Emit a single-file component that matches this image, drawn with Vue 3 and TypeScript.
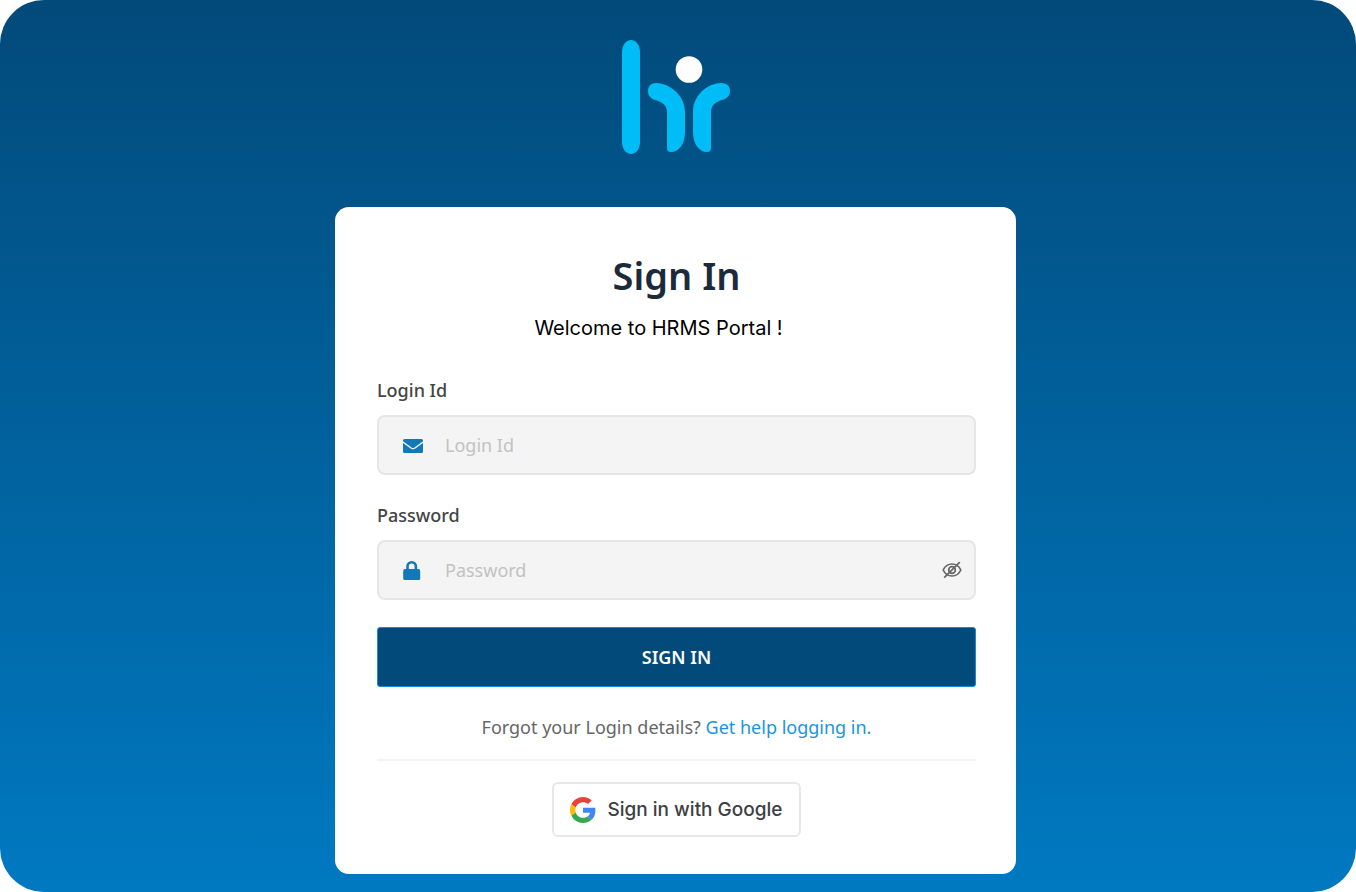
<script setup lang="ts">
import { ref } from 'vue'

const loginId = ref('')
const password = ref('')
const visible = ref(false)
</script>

<template>
  <main class="page">
    <svg class="logo" viewBox="0 0 108 114" role="img" aria-label="hr">
      <g fill="#00bdf7">
        <path d="M0 12C0 5 4 0 9 0s9 5 9 12v90c0 7-4 12-9 12s-9-5-9-12z" />
        <path d="M34 43C46 43 63 54 63 72V92C63 104 57 112 49 112Q45 112 45 108V72C45 66 41 62 33 60C29 59 26 55 26 51.500C26 46 29 43 34 43Z" />
        <path d="M99 43C87 43 71 54 71 72V92C71 104 77 112 85 112Q89 112 89 108V72C89 66 93 62 100 60C105 59 108 55 108 51.500C108 46 105 43 99 43Z" />
      </g>
      <circle cx="67" cy="29.500" r="13.300" fill="#fff" />
    </svg>

    <section class="card">
      <h1>Sign In</h1>
      <p class="welcome">Welcome to HRMS Portal !</p>

      <form @submit.prevent>
        <label for="login-id">Login Id</label>
        <div class="field">
          <svg class="icon" viewBox="0 0 20 20" fill="#1279b8" aria-hidden="true">
            <path d="M1.500 4h17Q20 4 20 5.500v.8l-8.500 6.100q-1.500 1.100-3 0L0 6.300v-.8Q0 4 1.500 4z" />
            <path d="M0 8.100l7.700 5.500q2.300 1.600 4.600 0L20 8.100v8.400q0 1.500-1.500 1.500h-17Q0 18 0 16.500z" />
          </svg>
          <input id="login-id" v-model="loginId" type="text" placeholder="Login Id" />
        </div>

        <label for="password">Password</label>
        <div class="field">
          <svg class="icon" viewBox="0 0 20 20" fill="#1279b8" aria-hidden="true">
            <path fill-rule="evenodd" d="M3.200 9V6.500a5.500 5.500 0 0 1 11 0V9h1q2 0 2 2v7.500q0 1.500-1.500 1.500h-14Q.2 20 .2 18.500V11q0-2 2-2zm2.600 0h5.800V6.500a2.900 2.900 0 0 0-5.800 0z" />
          </svg>
          <input id="password" v-model="password" :type="visible ? 'text' : 'password'" placeholder="Password" />
          <button class="eye" type="button" aria-label="Show password" @click="visible = !visible">
            <svg viewBox="0 0 20 20" fill="none" stroke="#666" stroke-width="1.700" aria-hidden="true">
              <path d="M1.200 10C3 6 6.300 4 10 4s7 2 8.800 6c-1.800 4-5.100 6-8.800 6s-7-2-8.800-6z" />
              <circle cx="10" cy="10" r="3.300" />
              <path d="M2.200 17.600L17.800 2.200" />
            </svg>
          </button>
        </div>

        <button class="submit" type="submit">SIGN IN</button>
      </form>

      <p class="help">Forgot your Login details? <a href="#">Get help logging in.</a></p>

      <button class="google" type="button">
        <svg viewBox="0 0 48 48" aria-hidden="true">
          <path fill="#ea4335" d="M24 9.500c3.540 0 6.710 1.220 9.210 3.600l6.850-6.850C35.900 2.380 30.470 0 24 0 14.620 0 6.510 5.380 2.560 13.220l7.980 6.190C12.430 13.720 17.740 9.500 24 9.500z" />
          <path fill="#4285f4" d="M46.980 24.550c0-1.570-.15-3.090-.38-4.550H24v9.020h12.940c-.58 2.960-2.260 5.480-4.780 7.180l7.730 6c4.510-4.180 7.090-10.360 7.090-17.650z" />
          <path fill="#fbbc05" d="M10.530 28.590c-.48-1.450-.76-2.990-.76-4.590s.27-3.140.76-4.590l-7.980-6.190C.92 16.460 0 20.120 0 24c0 3.880.92 7.540 2.560 10.780l7.970-6.190z" />
          <path fill="#34a853" d="M24 48c6.480 0 11.930-2.130 15.890-5.810l-7.730-6c-2.150 1.450-4.920 2.300-8.160 2.300-6.260 0-11.570-4.220-13.470-9.910l-7.980 6.190C6.510 42.620 14.620 48 24 48z" />
        </svg>
        <span>Sign in with Google</span>
      </button>
    </section>
  </main>
</template>

<style>
body {
  margin: 0;
  background: #fff;
}
</style>

<style scoped>
.page {
  box-sizing: border-box;
  min-height: 100vh;
  padding: 40px 5px 18px 0;
  display: flex;
  flex-direction: column;
  align-items: center;
  gap: 53px;
  border-radius: 44px;
  background: linear-gradient(#024a7a, #0079c1);
  font-family: "Noto Sans", "Open Sans", sans-serif;
}

.logo {
  width: 108px;
  height: 114px;
}

.card {
  box-sizing: border-box;
  width: 100%;
  max-width: 681px;
  padding: 39px 40px 37px 42px;
  display: flex;
  flex-direction: column;
  align-items: center;
  border-radius: 14px;
  background: #fff;
}

h1 {
  margin: 0;
  font-size: 38px;
  line-height: 58px;
  font-weight: 600;
  color: #1b2b3c;
}

.welcome {
  margin: 9px 36px 0 0;
  font-family: Inter, sans-serif;
  font-size: 20px;
  line-height: 30px;
  color: #000;
}

form {
  width: 100%;
  margin-top: 34px;
}

label {
  display: block;
  font-size: 18px;
  line-height: 26px;
  font-weight: 500;
  color: #444;
}

.field {
  box-sizing: border-box;
  height: 60px;
  margin: 12px 0 27px;
  padding: 0 12px 0 24px;
  display: flex;
  align-items: center;
  gap: 22px;
  border: 2px solid #e6e6e6;
  border-radius: 8px;
  background: #f4f4f4;
}

.icon {
  flex: none;
  width: 20px;
  height: 20px;
}

input {
  flex: 1;
  min-width: 0;
  height: 100%;
  padding: 0;
  border: 0;
  outline: 0;
  background: transparent;
  font: 18px "Noto Sans", "Open Sans", sans-serif;
  color: #4d4d4d;
}

input::placeholder {
  color: #c2c2c2;
  opacity: 1;
}

button {
  font-family: inherit;
  cursor: pointer;
}

.eye {
  width: 20px;
  height: 20px;
  padding: 0;
  border: 0;
  background: none;
}

.eye svg {
  display: block;
}

.submit {
  width: 100%;
  height: 60px;
  border: 1px solid #1a8ad6;
  border-radius: 3px;
  background: #024a7a;
  font-size: 18px;
  font-weight: 600;
  color: #fff;
}

.help {
  align-self: stretch;
  margin: 26px 0 21px;
  padding-bottom: 18px;
  border-bottom: 2px solid #f3f3f3;
  text-align: center;
  font-size: 18px;
  line-height: 28px;
  color: #666;
}

.help a {
  color: #1a94e0;
  text-decoration: none;
}

.google {
  height: 55px;
  padding: 0 16px;
  display: flex;
  align-items: center;
  gap: 11px;
  border: 2px solid #e8e8e8;
  border-radius: 6px;
  background: #fff;
  font-family: Inter, sans-serif;
  font-size: 19px;
  font-weight: 500;
  color: #3c4043;
}

.google svg {
  width: 26px;
  height: 26px;
}
</style>
